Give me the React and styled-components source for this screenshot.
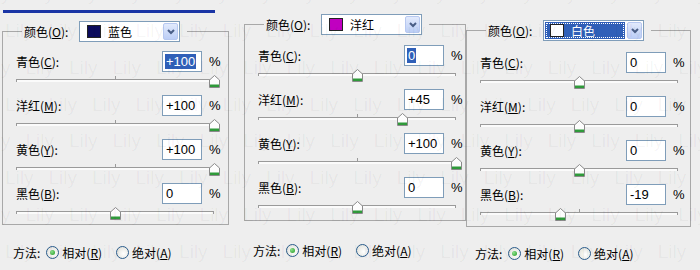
import React from 'react';
import styled, { createGlobalStyle } from 'styled-components';

const GlobalStyle = createGlobalStyle`
  html, body { margin: 0; padding: 0; background: #eeeeee; }
  body {
    font-family: "Noto Sans CJK SC", "Liberation Sans", sans-serif;
    font-size: 12px;
    color: #000;
  }
`

const Page = styled.div`
  position: relative;
  display: flex;
  width: 700px;
  height: 270px;
  overflow: hidden;
  background: #eeeeee;
`

const Panel = styled.div`
  width: ${p => p.$width}px;
  padding-top: ${p => p.$top}px;
  padding-left: ${p => p.$left}px;
  box-sizing: border-box;
  display: flex;
  flex-direction: column;
  flex-shrink: 0;
`

const TopBar = styled.div`
  margin: 10px 0 8px 1px;
  width: 212px;
  height: 3px;
  background: #1a35a5;
`

const Group = styled.fieldset`
  margin: 0;
  width: ${p => p.$width}px;
  padding: 0 0 ${p => p.$pb}px 13px;
  border: 1px solid #a8a8a8;
  box-sizing: border-box;
  min-width: 0;
`

const Legend = styled.legend`
  margin-left: 6px;
  padding: 0 7px 0 2px;
  display: flex;
  align-items: center;
  height: 21px;
`

const LegendText = styled.span`
  width: 55px;
  line-height: 21px;
`

const Select = styled.div`
  width: 101px;
  height: 21px;
  box-sizing: border-box;
  border: 1px solid #7f9db9;
  background: #fff;
  display: flex;
  align-items: center;
  padding: 1px;
`

const SelectValue = styled.div`
  flex: 1;
  height: 100%;
  display: flex;
  align-items: center;
  padding-left: ${p => (p.$focus ? 5 : 6)}px;
  margin-right: 2px;
  background: ${p => (p.$focus ? '#2f5fb8' : 'transparent')};
  color: ${p => (p.$focus ? '#fff' : '#000')};
  outline: ${p => (p.$focus ? '1px dotted #fff' : 'none')};
  outline-offset: -2px;
`

const Swatch = styled.span`
  width: 12px;
  height: 11px;
  border: 1px solid #222;
  background: ${p => p.$color};
  margin-right: 7px;
`

const ArrowButton = styled.div`
  width: 15px;
  height: 17px;
  box-sizing: border-box;
  border: 1px solid #b7c8f0;
  border-radius: 2px;
  background: linear-gradient(#e2eafc, #bccef6);
  display: flex;
  align-items: center;
  justify-content: center;
`

const Rows = styled.div`
  margin-top: ${p => p.$mt}px;
  display: flex;
  flex-direction: column;
  gap: 5px;
`

const Row = styled.div`
  display: flex;
  flex-direction: column;
`

const Line = styled.div`
  display: flex;
  align-items: center;
  height: 21px;
`

const Label = styled.span`
  width: 146px;
`

const Key = styled.span`
  text-decoration: underline;
  text-underline-offset: 1px;
`

const Field = styled.div`
  width: 40px;
  height: 21px;
  box-sizing: border-box;
  border: 1px solid #7f9db9;
  background: #fff;
  display: flex;
  align-items: center;
  padding-left: 2px;
  font-family: "Liberation Sans", sans-serif;
  font-size: 13px;
`

const Selected = styled.span`
  background: ${p => (p.$on ? '#2f5fb8' : 'transparent')};
  color: ${p => (p.$on ? '#fff' : '#000')};
  line-height: 15px;
  padding: 0 1px;
`

const Percent = styled.span`
  margin-left: 7px;
  font-family: "Liberation Sans", sans-serif;
  font-size: 13px;
`

const Slider = styled.div`
  position: relative;
  width: 198px;
  height: 18px;
  padding-top: 7px;
  box-sizing: border-box;
`

const Track = styled.div`
  position: relative;
  height: 3px;
  box-sizing: border-box;
  border-top: 1px solid #9a9a9a;
  border-left: 1px solid #9a9a9a;
  border-right: 1px solid #9a9a9a;
  background: #fbfbfb;

  &::before {
    content: '';
    position: absolute;
    left: 50%;
    top: -4px;
    width: 1px;
    height: 4px;
    background: #9a9a9a;
  }
`

const Thumb = styled.svg`
  position: absolute;
  top: 3px;
  margin-left: -5px;
`

const Method = styled.div`
  display: flex;
  align-items: center;
  margin-top: ${p => p.$mt}px;
  padding-left: ${p => p.$indent}px;
  height: 17px;
`

const MethodLabel = styled.span`
  margin-right: 6px;
`

const Radio = styled.span`
  width: 11px;
  height: 11px;
  border-radius: 50%;
  border: 1px solid #2a5c8c;
  background: radial-gradient(circle at 60% 60%, #ffffff, #dcdcd4);
  display: inline-flex;
  align-items: center;
  justify-content: center;
  margin-right: 3px;

  &::after {
    content: '';
    display: ${p => (p.$checked ? 'block' : 'none')};
    width: 5px;
    height: 5px;
    border-radius: 50%;
    background: radial-gradient(circle at 35% 35%, #8ee28e, #1f9a1f);
  }
`

const Option = styled.span`
  margin-right: 14px;
`

// faint "Lily" watermark laid over the whole screenshot
const Watermark = styled.div`
  position: absolute;
  inset: 0;
  pointer-events: none;
  display: flex;
  flex-direction: column;
  margin-top: -24px;
  font-family: "Liberation Sans", sans-serif;
  font-size: 19px;
  color: rgba(0, 0, 0, 0.045);
`

const MarkRow = styled.div`
  display: flex;
  gap: 15px;
  height: 43px;
  align-items: center;
  margin-left: ${p => p.$shift}px;
  white-space: nowrap;
`

const sliders = [
  { name: '青色', key: 'C' },
  { name: '洋红', key: 'M' },
  { name: '黄色', key: 'Y' },
  { name: '黑色', key: 'B' },
]

const Chevron = () => (
  <svg width="8" height="6" viewBox="0 0 8 6">
    <path d="M1 1 L4 4 L7 1" fill="none" stroke="#4a5e86" strokeWidth="2" />
  </svg>
)

const ThumbIcon = ({ pos }) => (
  <Thumb width="11" height="13" viewBox="0 0 11 13" style={{ left: pos }}>
    <path d="M0.5 5 L5.5 0.5 L10.5 5 L10.5 12.5 L0.5 12.5 Z" fill="#fdfdfd" stroke="#8a8a8a" />
    <rect x="1" y="9.5" width="9" height="2.5" fill="#2f9a3a" />
  </Thumb>
)

const ColorPanel = ({ cfg }) => (
  <Panel $width={cfg.width} $top={cfg.top} $left={cfg.left}>
    {cfg.bar && <TopBar />}
    <Group $width={cfg.groupWidth} $pb={cfg.pb}>
      <Legend>
        <LegendText>颜色(<Key>O</Key>):</LegendText>
        <Select>
          <SelectValue $focus={cfg.focus}>
            <Swatch $color={cfg.swatch} />
            {cfg.colorName}
          </SelectValue>
          <ArrowButton><Chevron /></ArrowButton>
        </Select>
      </Legend>
      <Rows $mt={cfg.rowsTop}>
        {sliders.map((s, i) => {
          const v = cfg.values[i]
          const text = v > 0 ? `+${v}` : `${v}`
          return (
            <Row key={s.key}>
              <Line>
                <Label>{s.name}(<Key>{s.key}</Key>):</Label>
                <Field>
                  <Selected $on={cfg.selected === i}>{text}</Selected>
                </Field>
                <Percent>%</Percent>
              </Line>
              <Slider>
                <Track />
                <ThumbIcon pos={99 + v * 0.99} />
              </Slider>
            </Row>
          )
        })}
      </Rows>
    </Group>
    <Method $mt={cfg.methodTop} $indent={cfg.indent}>
      <MethodLabel>方法:</MethodLabel>
      <Radio $checked />
      <Option>相对(<Key>R</Key>)</Option>
      <Radio />
      <Option>绝对(<Key>A</Key>)</Option>
    </Method>
  </Panel>
)

const panels = [
  {
    width: 236, top: 0, left: 2, bar: true, groupWidth: 227, pb: 2, rowsTop: 9,
    swatch: '#0b0b5c', colorName: '蓝色', values: [100, 100, 100, 0], selected: 0,
    methodTop: 19, indent: 11,
  },
  {
    width: 230, top: 14, left: 8, groupWidth: 222, pb: 4, rowsTop: 10,
    swatch: '#c000c0', colorName: '洋红', values: [0, 45, 100, 0], selected: 0,
    methodTop: 21, indent: 9,
  },
  {
    width: 234, top: 20, left: 0, groupWidth: 225, pb: 3, rowsTop: 11, focus: true,
    swatch: '#ffffff', colorName: '白色', values: [0, 0, 0, -19], selected: -1,
    methodTop: 18, indent: 9,
  },
]

const App = () => (
  <Page>
    <GlobalStyle />
    {panels.map((p, i) => <ColorPanel key={i} cfg={p} />)}
    <Watermark>
      {[0, 1, 2, 3, 4, 5, 6, 7].map(r => (
        <MarkRow key={r} $shift={r % 2 ? 5 : -18}>
          {Array.from({ length: 17 }).map((_, j) => <span key={j}>Lily</span>)}
        </MarkRow>
      ))}
    </Watermark>
  </Page>
)

export default App
